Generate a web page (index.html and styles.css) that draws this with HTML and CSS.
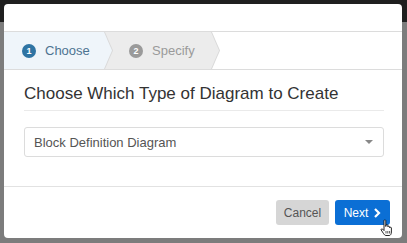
FILE: index.html
```html
<!DOCTYPE html>
<html lang="en">
<head>
    <meta charset="UTF-8">
    <meta name="viewport" content="width=device-width, initial-scale=1.0">
    <title>New Diagram</title>
    <link rel="stylesheet" href="styles.css">
</head>
<body>
    <div class="page">
        <div class="topbar"></div>
        <div class="backdrop"></div>
    </div>

    <div class="modal">
        <div class="modal-header"></div>

        <div class="steps">
            <div class="step active">
                <span class="step-num">1</span>
                <span class="step-label">Choose</span>
            </div>
            <div class="step">
                <span class="step-num">2</span>
                <span class="step-label">Specify</span>
            </div>
        </div>

        <div class="modal-body">
            <h2 class="title">Choose Which Type of Diagram to Create</h2>
            <div class="select">
                <span>Block Definition Diagram</span>
                <span class="caret"></span>
            </div>
        </div>

        <div class="modal-footer">
            <button class="btn btn-cancel">Cancel</button>
            <button class="btn btn-next">Next
                <svg class="chev" width="8" height="10" viewBox="0 0 8 10"><path d="M2 1 L6 5 L2 9" fill="none" stroke="#fff" stroke-width="2.2"/></svg>
            </button>
        </div>

        <!-- mouse pointer over the Next button -->
        <svg class="cursor" width="14" height="18" viewBox="0 0 14 18">
            <path d="M4 1.5 C4 0.8 5.8 0.8 5.8 1.5 L5.8 7.5 L6 6.2 C6 5.5 7.8 5.5 7.8 6.2 L7.8 7.8 C7.8 7.1 9.6 7.1 9.6 7.8 L9.6 8.8 C9.6 8.1 11.4 8.1 11.4 8.8 L11.4 13 C11.4 15 10.4 16.5 9.4 16.5 L6 16.5 C4.8 16.5 4.2 15.5 3.4 14.4 L1.2 11 C0.8 10.2 1.8 9.4 2.6 10.1 L4 11.6 Z" fill="#fff" stroke="#111" stroke-width="0.9" stroke-linejoin="round"/>
            <path d="M6 12 L6 14.5 M7.8 12 L7.8 14.5 M9.6 12 L9.6 14.5" stroke="#111" stroke-width="0.7"/>
        </svg>
    </div>
</body>
</html>
```

FILE: styles.css
```css
body {
    margin: 0;
    font-family: "Liberation Sans", Arial, sans-serif;
    background: #7a7a7a;
    overflow: hidden;
}
.page {
    height: 243px;
    display: flex;
    flex-direction: column;
}
.topbar {
    height: 22px;
    background: #1f1f1f;
}
.backdrop {
    flex: 1;
    background: #7c7c7c;
}
.modal {
    position: absolute;
    left: 4px;
    top: 4px;
    width: 398px;
    height: 234px;
    background: #fff;
    border-radius: 4px;
    display: flex;
    flex-direction: column;
    overflow: hidden;
}
.modal-header {
    height: 27px;
    border-bottom: 1px solid #dcdcdc;
}
.steps {
    display: flex;
    height: 37px;
    border-bottom: 1px solid #dcdcdc;
}
.step {
    position: relative;
    display: flex;
    align-items: center;
    gap: 9px;
    height: 37px;
    width: 115px;
    padding-left: 24px;
    box-sizing: border-box;
    margin-left: -8px;
    background: #d9d9d9;
    clip-path: polygon(0 0, calc(100% - 8px) 0, 100% 50%, calc(100% - 8px) 100%, 0 100%);
    color: #9a9a9a;
    font-size: 13px;
}
.step::before {
    content: '';
    position: absolute;
    top: 0;
    bottom: 0;
    left: 0;
    right: 1px;
    background: #ececec;
    clip-path: polygon(0 0, calc(100% - 8px) 0, 100% 50%, calc(100% - 8px) 100%, 0 100%);
}
.step.active {
    margin-left: 0;
    width: 109px;
    padding-left: 18px;
    z-index: 1;
    color: #4d7391;
}
.step.active::before {
    background: #eff5fa;
}
.step-num,
.step-label {
    position: relative;
}
.step-num {
    width: 14px;
    height: 14px;
    border-radius: 50%;
    background: #9a9a9a;
    color: #fff;
    font-size: 9px;
    font-weight: bold;
    display: flex;
    align-items: center;
    justify-content: center;
}
.step.active .step-num {
    background: #2f74a3;
}
.modal-body {
    padding: 0 18px 0 20px;
    flex: 1;
    border-bottom: 1px solid #e2e2e2;
}
.title {
    margin: 14px 0 0;
    padding-bottom: 7px;
    font-size: 17px;
    font-weight: normal;
    line-height: 19px;
    color: #333;
    border-bottom: 1px solid #eaeaea;
}
.select {
    margin-top: 16px;
    height: 30px;
    box-sizing: border-box;
    border: 1px solid #dcdcdc;
    border-radius: 3px;
    display: flex;
    align-items: center;
    justify-content: space-between;
    padding: 0 10px 0 9px;
    font-size: 13px;
    color: #555;
}
.caret {
    width: 0;
    height: 0;
    border-left: 4px solid transparent;
    border-right: 4px solid transparent;
    border-top: 4px solid #888;
}
.modal-footer {
    display: flex;
    justify-content: flex-end;
    gap: 6px;
    padding: 13px 12px 13px 0;
}
.btn {
    height: 25px;
    border: none;
    border-radius: 3px;
    font-family: inherit;
    font-size: 12px;
    padding: 0;
    display: flex;
    align-items: center;
    justify-content: center;
}
.btn-cancel {
    width: 53px;
    background: #d6d6d6;
    color: #555;
}
.btn-next {
    width: 55px;
    gap: 5px;
    background: #0b6fd5;
    color: #fff;
}
.cursor {
    position: absolute;
    left: 376px;
    top: 215px;
}
```
